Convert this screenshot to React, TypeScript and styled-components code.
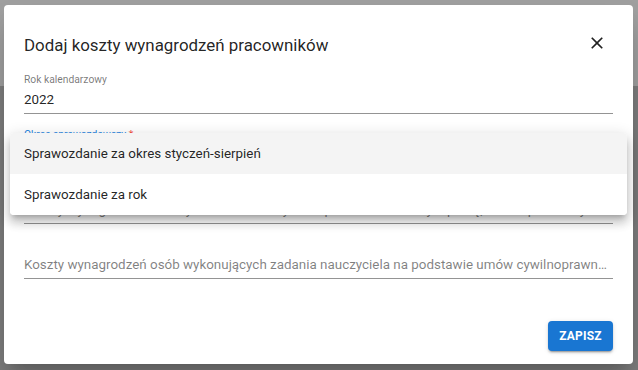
import React from 'react'
import styled, { createGlobalStyle } from 'styled-components'

const GlobalStyle = createGlobalStyle`
  html, body {
    margin: 0;
    padding: 0;
  }
  body {
    font-family: Roboto, "Liberation Sans", Arial, sans-serif;
    -webkit-font-smoothing: antialiased;
  }
`

const Backdrop = styled.div`
  position: relative;
  width: 638px;
  height: 370px;
  overflow: hidden;
  background: linear-gradient(#a0a0a0 0 86px, #7e7e7e 86px);
  padding: 5px 0 0 4px;
  box-sizing: border-box;
`

const Dialog = styled.div`
  width: 629px;
  height: 359px;
  box-sizing: border-box;
  background: #fff;
  border-radius: 4px;
  box-shadow: 0 11px 15px -7px rgba(0, 0, 0, 0.2), 0 24px 38px 3px rgba(0, 0, 0, 0.14);
  display: flex;
  flex-direction: column;
  padding: 28px 20px 13px 20px;
`

const Header = styled.div`
  display: flex;
  align-items: center;
  justify-content: space-between;
  height: 24px;
`

const Title = styled.h2`
  margin: 0;
  font-size: 16.9px;
  line-height: 24px;
  font-weight: 400;
  color: rgba(0, 0, 0, 0.87);
`

const CloseButton = styled.button`
  border: 0;
  background: none;
  padding: 0;
  margin: -5px 6px 0 0;
  width: 20px;
  height: 20px;
  display: flex;
  cursor: pointer;
  color: rgba(0, 0, 0, 0.87);
`

const Field = styled.div<{ $first?: boolean }>`
  margin-top: ${({ $first }) => ($first ? '16px' : '14px')};
  border-bottom: 1px solid rgba(0, 0, 0, 0.42);
  padding-bottom: 3px;
`

const Label = styled.div<{ $focused?: boolean }>`
  font-size: 10.3px;
  line-height: 14px;
  height: 14px;
  color: ${({ $focused }) => ($focused ? '#2a86e0' : 'rgba(0, 0, 0, 0.54)')};
  margin-bottom: 3px;
`

const Required = styled.span`
  color: #f44336;
`

const Value = styled.div<{ $placeholder?: boolean }>`
  font-size: 13.4px;
  line-height: 20px;
  height: 20px;
  color: ${({ $placeholder }) => ($placeholder ? 'rgba(0, 0, 0, 0.5)' : 'rgba(0, 0, 0, 0.87)')};
  white-space: nowrap;
  overflow: hidden;
  text-overflow: ellipsis;
`

const Footer = styled.div`
  margin-top: auto;
  display: flex;
  justify-content: flex-end;
`

const SaveButton = styled.button`
  width: 65px;
  height: 30px;
  border: 0;
  border-radius: 4px;
  background: #1976d2;
  color: #fff;
  font-family: Roboto, "Liberation Sans", Arial, sans-serif;
  font-size: 12px;
  font-weight: 700;
  letter-spacing: 0.2px;
  text-transform: uppercase;
  box-shadow: 0 3px 1px -2px rgba(0, 0, 0, 0.2), 0 2px 2px 0 rgba(0, 0, 0, 0.14),
    0 1px 5px 0 rgba(0, 0, 0, 0.12);
  cursor: pointer;
`

const Menu = styled.ul`
  position: absolute;
  left: 10px;
  top: 133px;
  width: 617px;
  margin: 0;
  padding: 0;
  list-style: none;
  background: #fff;
  border-radius: 4px;
  box-shadow: 0 5px 5px -3px rgba(0, 0, 0, 0.2), 0 8px 10px 1px rgba(0, 0, 0, 0.14),
    0 3px 14px 2px rgba(0, 0, 0, 0.12);
  overflow: hidden;
`

const MenuItem = styled.li<{ $hover?: boolean }>`
  height: 41px;
  display: flex;
  align-items: center;
  padding-left: 14px;
  font-size: 13.4px;
  color: rgba(0, 0, 0, 0.87);
  background: ${({ $hover }) => ($hover ? '#f4f4f4' : '#fff')};
`

const CloseIcon = () => (
  <svg viewBox="0 0 24 24" width="20" height="20" fill="currentColor">
    <path d="M19 6.41 17.59 5 12 10.59 6.41 5 5 6.41 10.59 12 5 17.59 6.41 19 12 13.41 17.59 19 19 17.59 13.41 12z" />
  </svg>
)

const periods = ['Sprawozdanie za okres styczeń-sierpień', 'Sprawozdanie za rok']

const App: React.FC = () => {
  return (
    <Backdrop>
      <GlobalStyle />
      <Dialog>
        <Header>
          <Title>Dodaj koszty wynagrodzeń pracowników</Title>
          <CloseButton aria-label="Zamknij">
            <CloseIcon />
          </CloseButton>
        </Header>
        <Field $first>
          <Label>Rok kalendarzowy</Label>
          <Value>2022</Value>
        </Field>
        <Field>
          <Label $focused>
            Okres sprawozdawczy <Required>*</Required>
          </Label>
          <Value />
        </Field>
        <Field>
          <Label />
          <Value $placeholder>
            Koszty wynagrodzeń nauczycieli zatrudnionych na podstawie umowy o pracę, wraz z pochodnymi
          </Value>
        </Field>
        <Field>
          <Label />
          <Value $placeholder>
            Koszty wynagrodzeń osób wykonujących zadania nauczyciela na podstawie umów cywilnoprawnych
          </Value>
        </Field>
        <Footer>
          <SaveButton>Zapisz</SaveButton>
        </Footer>
      </Dialog>
      <Menu>
        {periods.map((p, i) => (
          <MenuItem key={p} $hover={i === 0}>
            {p}
          </MenuItem>
        ))}
      </Menu>
    </Backdrop>
  )
}

export default App
